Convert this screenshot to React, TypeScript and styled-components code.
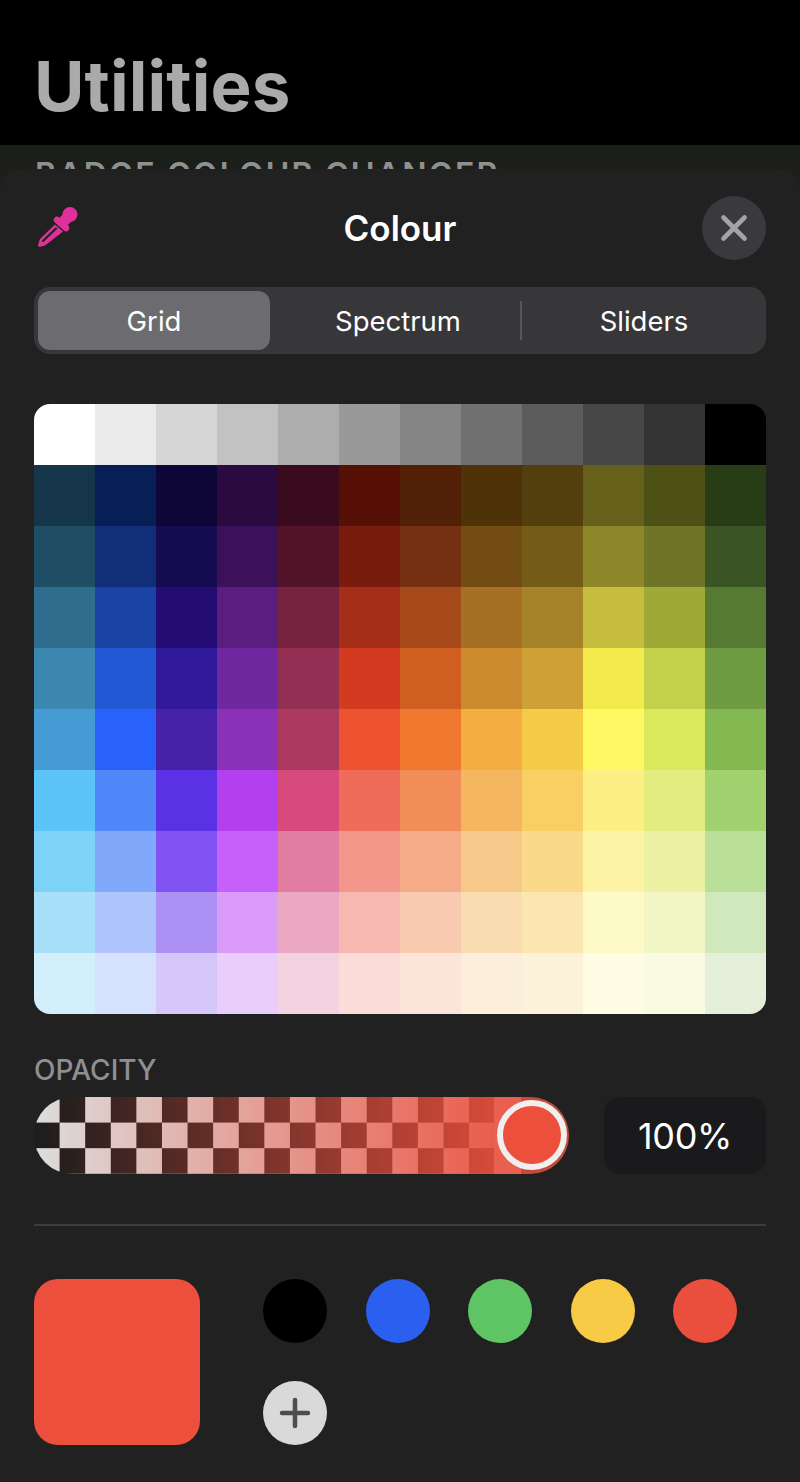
import React from 'react'
import styled, { createGlobalStyle } from 'styled-components'

const palette = [
  ['#ffffff', '#ebebeb', '#d6d6d6', '#c2c2c2', '#adadad', '#999999', '#858585', '#707070', '#5c5c5c', '#474747', '#333333', '#000000'],
  ['#15364a', '#071f55', '#0d0637', '#2a0a3f', '#3a0a1d', '#561006', '#512006', '#4e3309', '#533f0e', '#65601a', '#4d5115', '#283c16'],
  ['#1f4d65', '#102f78', '#150c52', '#3b1259', '#531329', '#7a1c0d', '#743011', '#734c14', '#745c18', '#8e882a', '#6f7526', '#3b5424'],
  ['#2e6d8e', '#1b43a5', '#230d75', '#591e7e', '#75233f', '#a62d17', '#a74a1a', '#a56f24', '#a68329', '#c6bd3f', '#9ea936', '#567a33'],
  ['#3c87b0', '#2258d3', '#30199a', '#6f28a0', '#922f52', '#d23b20', '#cf5e20', '#cc8a2f', '#cda135', '#f3ea4b', '#c3d04a', '#6f9c42'],
  ['#459cd4', '#2962fb', '#4522a8', '#8b31b8', '#ab3960', '#ed5331', '#ef772e', '#f4ad40', '#f5ca47', '#fef962', '#d9e95b', '#84b952'],
  ['#5cc4f6', '#5287f9', '#5a31e4', '#b240ef', '#d74a7c', '#ee6c59', '#f18d58', '#f4b65f', '#f8cf62', '#fcef83', '#e2ec7f', '#a2d26f'],
  ['#7dd3f7', '#80a9fb', '#8153f3', '#c560fb', '#e27ca0', '#f29689', '#f5ab88', '#f6c98a', '#f9da8b', '#fcf3a5', '#ebf2a3', '#badf98'],
  ['#a8e0f9', '#afc5fc', '#ac90f3', '#da9cf8', '#eba8c2', '#f6b8b0', '#f8cbb0', '#f9dcb0', '#fbe6b1', '#fefac5', '#f2f6c4', '#d1e8bd'],
  ['#d3effc', '#d6e1fd', '#d5c7fa', '#e9cdfb', '#f4d3e0', '#fadcd9', '#fbe5d9', '#fbeedb', '#fcf2d9', '#fefce2', '#f8fae1', '#e3efd9'],
]

const favourites = ['#000000', '#2a5ff0', '#5fc464', '#f7cb45', '#ea4e3c']

const App = () => {
  return (
    <Page>
      <GlobalStyle />
      <TitleBar>
        <Title>Utilities</Title>
      </TitleBar>
      <Backdrop>
        <SectionLabel>BADGE COLOUR CHANGER</SectionLabel>
      </Backdrop>

      <Sheet>
        <SheetHead>
          <Dropper viewBox="0 0 40 40">
            <circle cx="32" cy="7.500" r="7.500" fill="#e0319a" />
            <path d="M22 18 31 9" stroke="#e0319a" strokeWidth="11" />
            <path d="M19 13 28 21" stroke="#e0319a" strokeWidth="6.500" strokeLinecap="round" />
            <path d="M17 17.500 25 24.500 7 38.500 1 40 0 38 2 32z" fill="#e0319a" />
            <path d="M18 21.500 5 34" stroke="#212121" strokeWidth="2.200" strokeLinecap="round" />
          </Dropper>
          <SheetTitle>Colour</SheetTitle>
          <CloseButton>
            <svg width="28" height="28" viewBox="0 0 28 28">
              <path d="M3.500 3.500 24.500 24.500M24.500 3.500 3.500 24.500" stroke="#a3a3a8" strokeWidth="4.600" strokeLinecap="round" />
            </svg>
          </CloseButton>
        </SheetHead>

        <Segments>
          <Segment $active>Grid</Segment>
          <Segment>Spectrum</Segment>
          <SegmentLine />
          <Segment>Sliders</Segment>
        </Segments>

        <ColourGrid>
          {palette.flat().map((c, i) => (
            <Cell key={i} $c={c} />
          ))}
        </ColourGrid>

        <OpacityLabel>OPACITY</OpacityLabel>
        <OpacityRow>
          <Track>
            <Thumb />
          </Track>
          <OpacityValue>100%</OpacityValue>
        </OpacityRow>

        <Divider />

        <Bottom>
          <BigSwatch />
          <Favourites>
            {favourites.map((c) => (
              <Dot key={c} $c={c} />
            ))}
            <Dot $c="#d9d9d9">
              <svg width="32" height="32" viewBox="0 0 32 32">
                <path d="M16 3v26M3 16h26" stroke="#4d4d4d" strokeWidth="4.500" strokeLinecap="round" />
              </svg>
            </Dot>
          </Favourites>
        </Bottom>
      </Sheet>
    </Page>
  )
}

export default App

const GlobalStyle = createGlobalStyle`
  html, body {
    margin: 0;
    padding: 0;
    background: #000;
  }
  * {
    box-sizing: border-box;
  }
`

const Page = styled.div`
  position: relative;
  width: 800px;
  height: 1482px;
  overflow: hidden;
  background: #000;
  font-family: Inter, "Liberation Sans", sans-serif;
`

const TitleBar = styled.div`
  height: 145px;
  padding: 45px 0 0 34px;
`

const Title = styled.div`
  font-size: 69px;
  line-height: 82px;
  font-weight: 700;
  letter-spacing: 0.1px;
  color: #a9aba8;
`

const Backdrop = styled.div`
  height: 100%;
  padding: 12px 0 0 35px;
  background: #1c1e1a;
`

const SectionLabel = styled.div`
  font-size: 32px;
  line-height: 36px;
  font-weight: 600;
  letter-spacing: 2.200px;
  color: #8f918e;
`

const Sheet = styled.div`
  position: absolute;
  top: 169px;
  left: 0;
  right: 0;
  bottom: 0;
  padding: 27px 34px 0;
  background: #212121;
  border-radius: 20px 20px 0 0;
`

const SheetHead = styled.div`
  position: relative;
  display: flex;
  align-items: center;
  justify-content: space-between;
  height: 64px;
`

const Dropper = styled.svg`
  width: 40px;
  height: 40px;
  margin: -2px 0 0 4px;
`

const SheetTitle = styled.div`
  position: absolute;
  left: 0;
  right: 0;
  text-align: center;
  font-size: 35px;
  font-weight: 600;
  color: #fff;
`

const CloseButton = styled.div`
  width: 64px;
  height: 64px;
  display: flex;
  align-items: center;
  justify-content: center;
  border-radius: 50%;
  background: #3a3a3e;
`

const Segments = styled.div`
  position: relative;
  display: grid;
  grid-template-columns: 232px 246px 1fr;
  column-gap: 5px;
  height: 67px;
  margin-top: 27px;
  padding: 4px;
  border-radius: 16px;
  background: #37373a;
`

const Segment = styled.div<{ $active?: boolean }>`
  display: flex;
  align-items: center;
  justify-content: center;
  font-size: 27.500px;
  color: #fff;
  border-radius: 12px;
  background: ${(props) => (props.$active ? '#6b6b70' : 'transparent')};
`

const SegmentLine = styled.div`
  position: absolute;
  left: 486px;
  top: 14px;
  width: 2px;
  height: 39px;
  background: #57575b;
`

const ColourGrid = styled.div`
  display: grid;
  grid-template-columns: repeat(12, 61px);
  grid-auto-rows: 61px;
  margin-top: 50px;
  border-radius: 16px;
  overflow: hidden;
`

const Cell = styled.div<{ $c: string }>`
  background: ${(props) => props.$c};
`

const OpacityLabel = styled.div`
  margin-top: 41px;
  font-size: 28px;
  line-height: 30px;
  font-weight: 500;
  color: #8e8e93;
`

const OpacityRow = styled.div`
  display: flex;
  justify-content: space-between;
  margin-top: 12px;
`

const Track = styled.div`
  position: relative;
  width: 535px;
  height: 77px;
  border-radius: 39px;
  background:
    linear-gradient(to right, transparent 91%, #c44a3c 91%),
    linear-gradient(to right, rgba(236, 79, 60, 0) 0%, rgba(236, 79, 60, 0.9) 86%, #e95f50 86%),
    conic-gradient(#1c1c1c 25%, #dddddd 0 50%, #1c1c1c 0 75%, #dddddd 0) 0 0 / 51.2px 51.2px;
`

const Thumb = styled.div`
  position: absolute;
  top: 3px;
  right: 2px;
  width: 70px;
  height: 70px;
  border-radius: 50%;
  border: 6px solid #f1efee;
  background: #ec4f3b;
`

const OpacityValue = styled.div`
  display: flex;
  align-items: center;
  justify-content: center;
  width: 162px;
  height: 77px;
  border-radius: 16px;
  font-size: 36px;
  letter-spacing: -0.3px;
  color: #fff;
  background: #1a1a1c;
`

const Divider = styled.div`
  height: 2px;
  margin-top: 50px;
  background: #3c3c3c;
`

const Bottom = styled.div`
  display: flex;
  margin-top: 53px;
`

const BigSwatch = styled.div`
  width: 166px;
  height: 166px;
  border-radius: 24px;
  background: #ec4f3c;
`

const Favourites = styled.div`
  display: grid;
  grid-template-columns: repeat(5, 64px);
  grid-auto-rows: 64px;
  column-gap: 38.500px;
  row-gap: 38px;
  margin-left: 63px;
`

const Dot = styled.div<{ $c: string }>`
  display: flex;
  align-items: center;
  justify-content: center;
  border-radius: 50%;
  background: ${(props) => props.$c};
`
